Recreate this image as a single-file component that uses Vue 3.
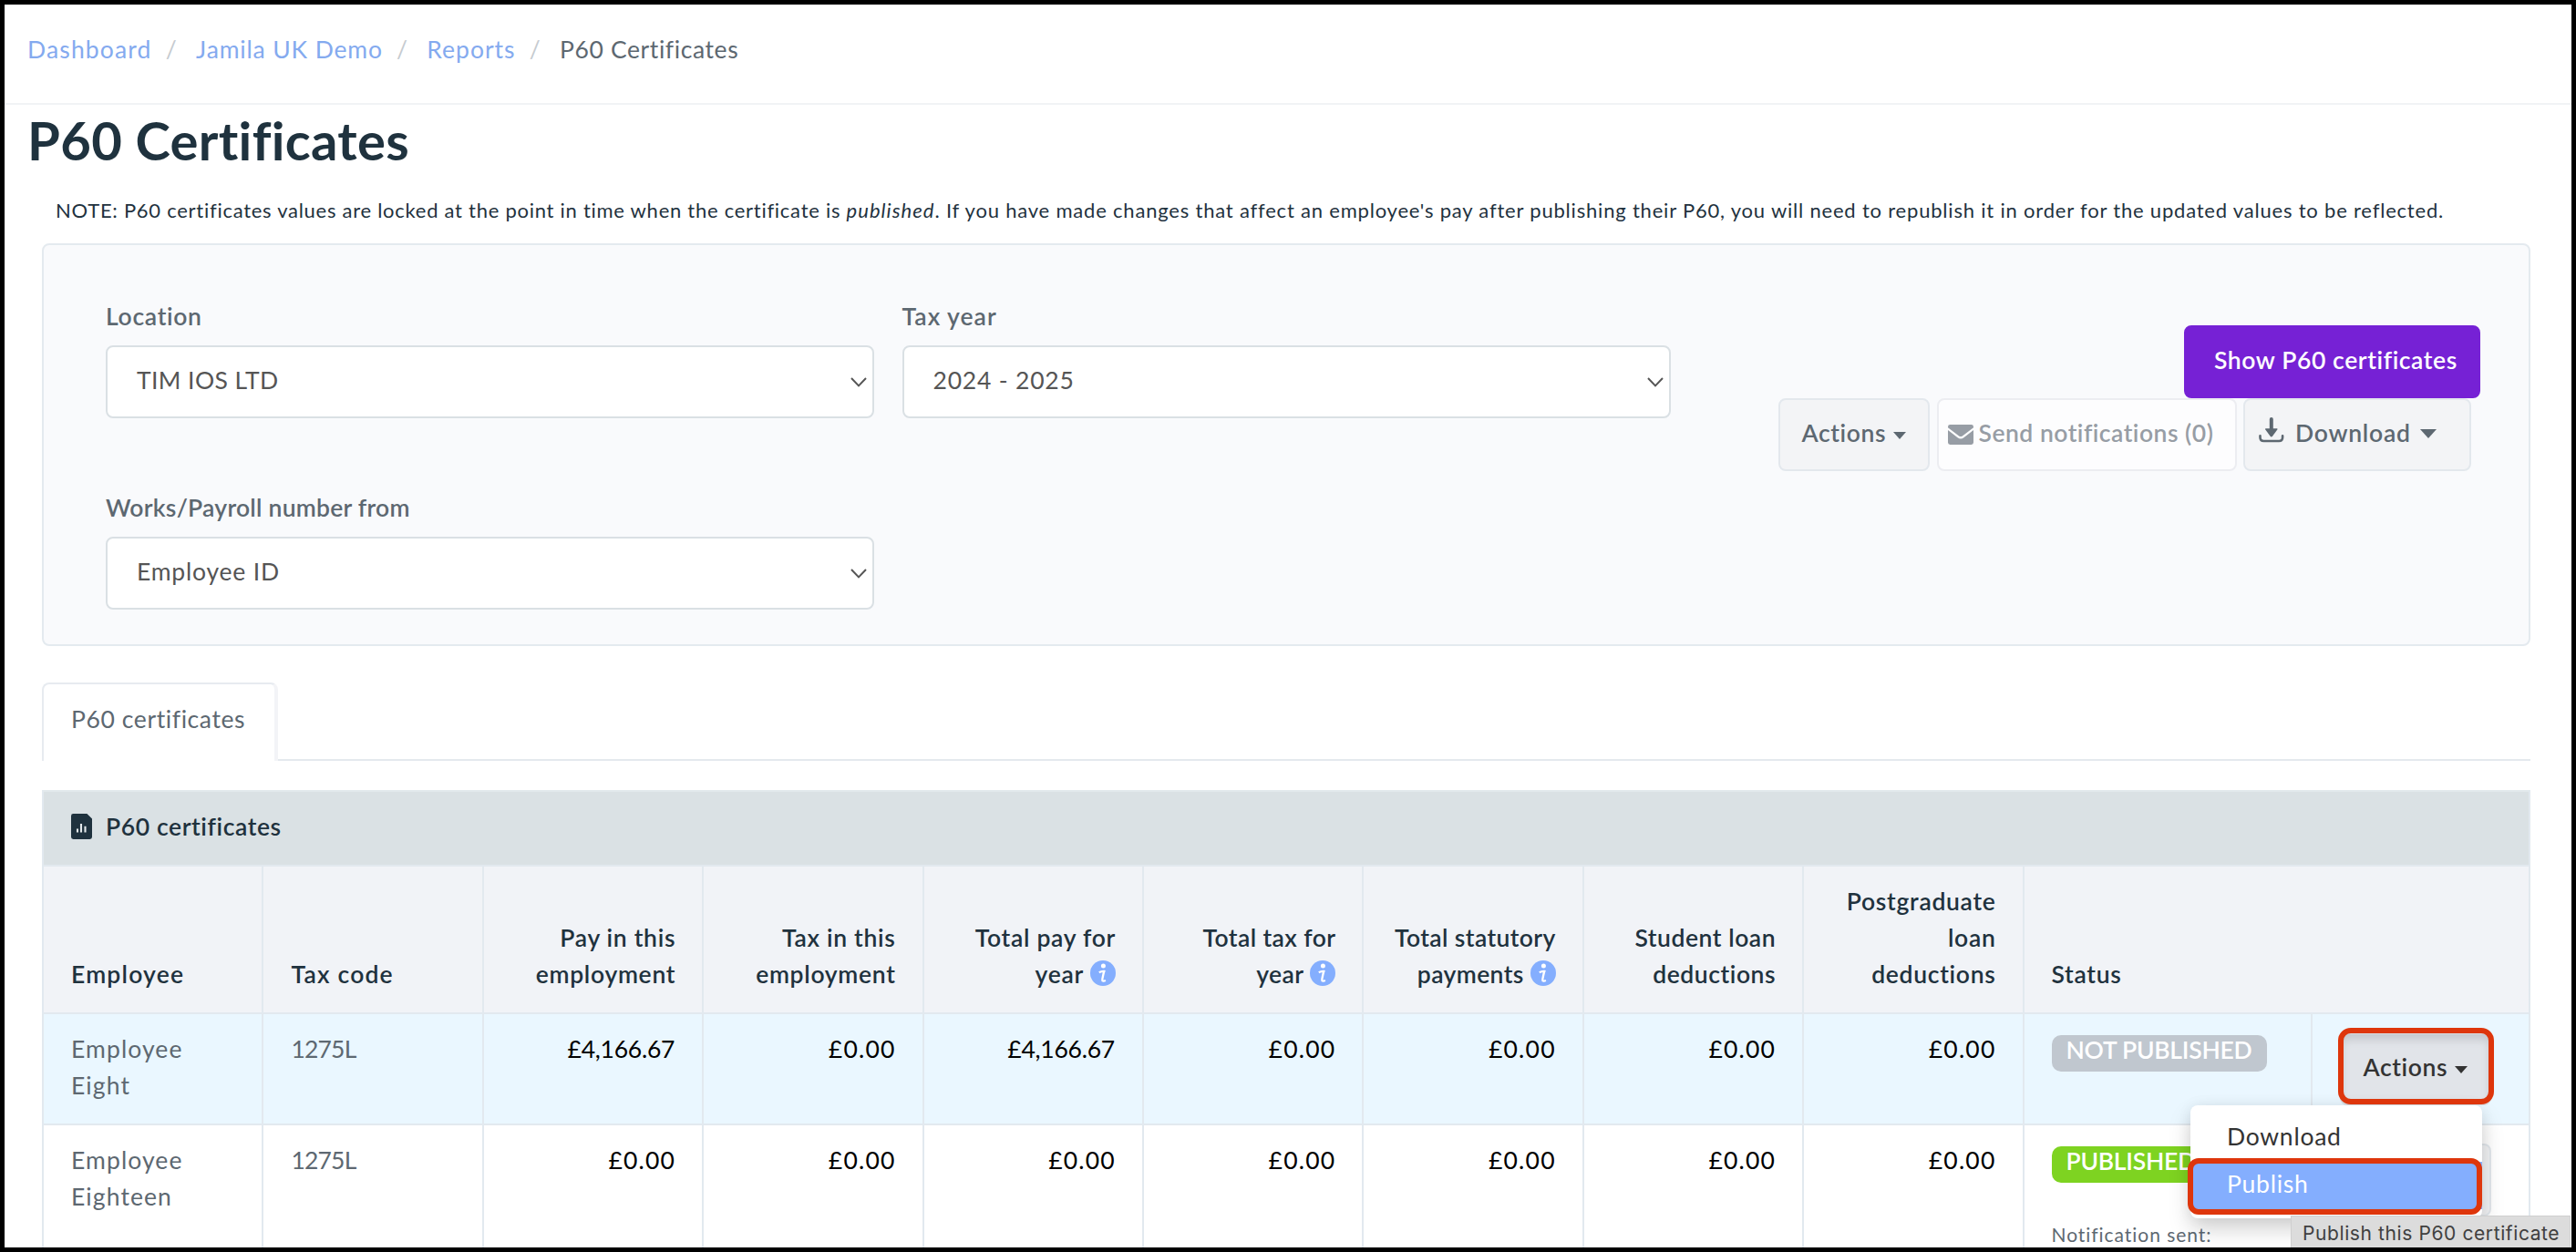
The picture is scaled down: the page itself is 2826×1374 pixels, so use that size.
<script setup>
const crumbs = [
  { text: 'Dashboard', cls: 'c1' },
  { text: 'Jamila UK Demo', cls: 'c2' },
  { text: 'Reports', cls: 'c3' },
]
const heads = [
  { lines: ['Employee'], left: true, cls: 'wide' },
  { lines: ['Tax code'], left: true, cls: 'wide' },
  { lines: ['Pay in this', 'employment'], cls: 'mid' },
  { lines: ['Tax in this', 'employment'], cls: 'mid' },
  { lines: ['Total pay for', 'year'], info: true, cls: 'mid' },
  { lines: ['Total tax for', 'year'], info: true },
  { lines: ['Total statutory', 'payments'], info: true },
  { lines: ['Student loan', 'deductions'], cls: 'soft' },
  { lines: ['Postgraduate', 'loan', 'deductions'], cls: 'mid' },
]
const rows = [
  {
    name: ['Employee', 'Eight'], code: '1275L', active: true,
    pay: ['£4,166.67', '£0.00', '£4,166.67', '£0.00', '£0.00', '£0.00', '£0.00'],
    status: 'NOT PUBLISHED',
  },
  {
    name: ['Employee', 'Eighteen'], code: '1275L', published: true,
    pay: ['£0.00', '£0.00', '£0.00', '£0.00', '£0.00', '£0.00', '£0.00'],
    status: 'PUBLISHED', note: 'Notification sent:',
  },
]
</script>

<template>
  <div class="page">
    <nav class="crumbs">
      <template v-for="c in crumbs" :key="c.text">
        <a :class="c.cls">{{ c.text }}</a><span class="slash">/</span>
      </template>
      <span class="here">P60 Certificates</span>
    </nav>

    <h1>P60 Certificates</h1>
    <p class="intro">NOTE: P60 certificates values are locked at the point in time when the certificate is <em>published</em><span class="rest">. If you have made changes that affect an employee's pay after publishing their P60, you will need to republish it in order for the updated values to be reflected.</span></p>

    <section class="filters">
      <div class="fields">
        <div class="field">
          <label>Location</label>
          <div class="select"><span class="s1">TIM IOS LTD</span><svg width="18" height="11" viewBox="0 0 18 11"><path d="M1 1l8 8.4L17 1" /></svg></div>
        </div>
        <div class="field">
          <label class="year">Tax year</label>
          <div class="select"><span>2024 - 2025</span><svg width="18" height="11" viewBox="0 0 18 11"><path d="M1 1l8 8.4L17 1" /></svg></div>
        </div>
        <div class="field">
          <label class="tight">Works/Payroll number from</label>
          <div class="select"><span>Employee ID</span><svg width="18" height="11" viewBox="0 0 18 11"><path d="M1 1l8 8.4L17 1" /></svg></div>
        </div>
      </div>
      <div class="tools">
        <button class="btn primary">Show P60 certificates</button>
        <div class="group">
          <button class="btn actions">Actions<i class="caret"></i></button>
          <button class="btn send">
            <svg width="28" height="22" viewBox="0 0 28 22"><path d="M2.4 0h23.2A2.4 2.4 0 0 1 28 2.4v.9L16.2 12.2q-2.2 1.7-4.4 0L0 3.3v-.9A2.4 2.4 0 0 1 2.4 0z" /><path d="M0 6l10.6 8.2q3.4 2.6 6.8 0L28 6v13.6a2.4 2.4 0 0 1-2.4 2.4H2.4A2.4 2.4 0 0 1 0 19.600z" /></svg>
            <span>Send notifications (0)</span>
          </button>
          <button class="btn download">
            <svg width="28" height="28" viewBox="0 0 28 28"><path class="line" d="M1.500 20.300v1.700q0 4 4 4h16.600q4 0 4-4v-1.700" /><path class="shaft" d="M13.800 2v11" /><path d="M7.400 12.300h12.800q.6.500.100 1.200L15 20.700q-1.200 1.400-2.400 0L7.300 13.500q-.5-.7.100-1.200z" /></svg>
            <span>Download</span><i class="caret big"></i>
          </button>
        </div>
      </div>
    </section>

    <div class="tabs"><div class="tab">P60 certificates</div><div class="rule"></div></div>

    <table>
      <colgroup>
        <col v-for="n in 9" :key="n" class="col" /><col class="col-status" /><col class="col" />
      </colgroup>
      <thead>
        <tr class="band">
          <td colspan="11">
            <div>
              <svg width="23" height="28" viewBox="0 0 23 28"><path d="M2.400 0H17.400L23 5.600V25.600A2.400 2.400 0 0 1 20.600 28H2.400A2.400 2.400 0 0 1 0 25.600V2.400A2.400 2.400 0 0 1 2.400 0z" fill="#1f323e" /><path d="M7 16.500v4M11 11v9.500M15.500 13.700v6.800" stroke="#e3e9eb" stroke-width="2.100" /></svg>
              <span>P60 certificates</span>
            </div>
          </td>
        </tr>
        <tr class="heads">
          <th v-for="(h, i) in heads" :key="i" :class="[h.cls, { left: h.left }]">
            <div v-for="(l, j) in h.lines" :key="j" class="ln">{{ l }}<svg v-if="h.info && j === h.lines.length - 1" class="info" width="28" height="28" viewBox="0 0 28 28"><circle cx="14" cy="14" r="14" fill="#84aefe" /><circle cx="14.400" cy="6" r="2.500" fill="#fff" /><path d="M9.800 13.300Q12.600 11.600 15.300 12Q14.600 14 13.300 20.600Q12.900 23.700 16.900 22" fill="none" stroke="#fff" stroke-width="2.300" /></svg></div>
          </th>
          <th class="left mid" colspan="2"><div class="ln">Status</div></th>
        </tr>
      </thead>
      <tbody>
        <tr v-for="r in rows" :key="r.name[1]" :class="{ active: r.active }">
          <td class="name"><div v-for="n in r.name" :key="n">{{ n }}</div></td>
          <td class="code">{{ r.code }}</td>
          <td v-for="(p, i) in r.pay" :key="i" class="num" :class="{ long: p.length > 6 }">{{ p }}</td>
          <td class="status">
            <div class="badge" :class="{ green: r.published }">{{ r.status }}</div>
            <div v-if="r.note" class="sent">{{ r.note }}</div>
          </td>
          <td class="act"><button class="btn actions" :class="{ pressed: r.active }">Actions<i class="caret"></i></button></td>
        </tr>
      </tbody>
    </table>

    <div class="menu">
      <div class="item">Download</div>
      <div class="item on">Publish</div>
    </div>
    <div class="mark mark-actions"></div>
    <div class="mark mark-publish"></div>
    <div class="tip">Publish this P60 certificate</div>
  </div>
</template>

<style>
body { margin: 0; background: #000; }
</style>

<style scoped>
.page {
  position: relative;
  box-sizing: border-box;
  width: 2826px;
  height: 1374px;
  border: 5px solid #000;
  background: #fff;
  overflow: hidden;
  font: 400 26.5px/40px Lato, "Open Sans", sans-serif;
  color: #5d6871;
  white-space: nowrap;
}
svg { display: block; flex: none; }

.crumbs {
  display: flex;
  align-items: center;
  box-sizing: border-box;
  height: 110px;
  padding: 0 0 11px 25px;
  border-bottom: 2px solid #f1f3f5;
}
.crumbs a { color: #84aaef; }
.c1 { letter-spacing: 1.15px; }
.c2 { letter-spacing: .85px; }
.c3 { letter-spacing: 1px; }
.here { letter-spacing: .6px; }
.slash { width: 48.500px; text-align: center; color: #c6cbd0; text-indent: -6px; }

h1 {
  margin: 4px 0 0 25px;
  font-size: 58px;
  line-height: 70px;
  font-weight: 700;
  letter-spacing: .3px;
  color: #1f323e;
}
.intro {
  margin: 22px 0 16px 56px;
  font-size: 22px;
  line-height: 40px;
  letter-spacing: .73px;
  color: #1f323e;
}
.intro em { letter-spacing: 1.050px; }
.intro .rest { letter-spacing: .8px; }

.filters {
  display: flex;
  justify-content: space-between;
  box-sizing: border-box;
  width: 2730px;
  height: 442px;
  margin-left: 41px;
  border: 2px solid #e4eaef;
  border-radius: 8px;
  background: #f9fafc;
}
.fields {
  display: grid;
  grid-template-columns: 843px 843px;
  column-gap: 30.500px;
  row-gap: 78px;
  align-content: start;
  padding: 58px 0 0 68px;
}
.field label { display: block; height: 52px; font-weight: 600; letter-spacing: .7px; }
.field label.tight { letter-spacing: .25px; }
.field label.year { letter-spacing: 1px; }
.select {
  display: flex;
  align-items: center;
  justify-content: space-between;
  box-sizing: border-box;
  height: 80px;
  padding: 0 6px 0 32px;
  border: 2px solid #dae0e4;
  border-radius: 8px;
  background: #fff;
  color: #555;
  letter-spacing: .8px;
}
.select span { padding-bottom: 4px; }
.select .s1 { letter-spacing: .4px; }
.select svg { fill: none; stroke: #555; stroke-width: 2; }

.tools {
  display: flex;
  flex-direction: column;
  align-items: flex-end;
  padding: 88px 53px 0 0;
}
.btn {
  display: flex;
  align-items: center;
  box-sizing: border-box;
  height: 80px;
  margin: 0;
  padding: 0 0 4px;
  border: 2px solid #e3e8ed;
  border-radius: 8px;
  background: #f3f4f6;
  font: 600 26.5px/40px Lato, "Open Sans", sans-serif;
  letter-spacing: .6px;
  color: #5d6871;
}
.primary {
  width: 325px;
  padding-left: 31px;
  border-color: #7621d5;
  background: #7621d5;
  color: #fff;
}
.group { display: flex; gap: 7.500px; margin-right: 10px; }
.actions { width: 166.500px; padding-left: 24px; }
.caret {
  width: 0;
  height: 0;
  margin: 5px 0 0 8px;
  border: 7.700px solid transparent;
  border-top: 8px solid currentColor;
  border-bottom: 0;
}
.caret.big { margin: 2px 0 0 10px; border-width: 10px 9.700px 0; }
.send {
  width: 329px;
  padding-left: 10px;
  border-color: #ecedf1;
  background: #fdfdfe;
  color: #979da5;
  letter-spacing: .5px;
}
.send span { margin-left: 6px; }
.send svg { margin-top: 3px; fill: #979da5; }
.download { width: 250px; padding-left: 15px; }
.download svg { margin-top: -7px; fill: #5d6871; }
.download .line { fill: none; stroke: #5d6871; stroke-width: 2.600; stroke-linecap: round; }
.download .shaft { stroke: #5d6871; stroke-width: 4; stroke-linecap: round; }
.download span { margin-left: 12px; letter-spacing: .75px; }

.tabs { display: flex; width: 2730px; height: 86px; margin: 40px 0 32px 41px; }
.tab {
  box-sizing: border-box;
  width: 259px;
  padding: 18px 0 0 30px;
  border: 2px solid #e7ebf0;
  border-right: 4px solid #f3f4f7;
  border-bottom: 0;
  border-radius: 8px 8px 0 0;
  letter-spacing: .6px;
}
.rule { flex: 1; border-bottom: 2px solid #e4e9ee; }

table {
  width: 2730px;
  margin-left: 41px;
  border-collapse: separate;
  border-spacing: 0;
  table-layout: fixed;
}
.col { width: 241.400px; }
.col-status { width: 316px; }
td, th {
  box-sizing: border-box;
  padding: 18px 29px 20px 30px;
  border-left: 2px solid #e2e9ef;
  border-bottom: 2px solid #e2e9ef;
  vertical-align: top;
  text-align: left;
}
td:last-child, th:last-child { border-right: 2px solid #e2e9ef; }
.band td { height: 84px; padding: 0 30px; border-top: 2px solid #e2e9ec; background: #dae1e4; vertical-align: middle; }
.band div { display: flex; align-items: center; padding-bottom: 4px; font-weight: 600; letter-spacing: .6px; color: #1f323e; }
.band span { margin-left: 15px; }
.heads th {
  height: 162px;
  padding: 18px 29px 22px 30px;
  background: #f1f3f7;
  vertical-align: bottom;
  text-align: right;
  font-weight: 600;
  letter-spacing: .400px;
  color: #1f323e;
}
.heads th.left { text-align: left; }
.heads th.wide { letter-spacing: 1.200px; }
.heads th.mid { letter-spacing: .700px; }
.heads th.soft { letter-spacing: .550px; }
.ln { height: 40px; }
.info { display: inline-block; margin-left: 7px; vertical-align: -3px; }
tbody td { height: 122px; }
.active td { background: #eaf7ff; }
.name { letter-spacing: 1.100px; }
.code { letter-spacing: -.8px; }
.num { text-align: right; letter-spacing: 1.200px; color: #000; }
.num.long { letter-spacing: -.25px; padding-right: 30px; }
.status { padding-top: 23px; }
.badge {
  box-sizing: border-box;
  width: 236px;
  height: 40px;
  padding-left: 16px;
  border-radius: 10px;
  background: #c0c7cf;
  font-weight: 600;
  line-height: 33px;
  letter-spacing: -.25px;
  color: #fff;
}
.badge.green { width: 180px; background: #7ed321; }
.sent { margin-top: 37px; font-size: 21px; letter-spacing: .95px; }
.act { padding-top: 20px; padding-bottom: 20px; }
.act .btn { height: 80px; }
.act .pressed {
  border-color: #d9dde2;
  background: #e1e4e9;
  box-shadow: inset 0 6px 10px rgba(0, 0, 0, .125);
  color: #333;
}

.menu {
  position: absolute;
  left: 2398px;
  top: 1208px;
  box-sizing: border-box;
  width: 320px;
  height: 124px;
  padding: 10px 0;
  border-radius: 8px;
  background: #fff;
  box-shadow: 0 12px 24px rgba(0, 0, 0, .175), 0 0 16px rgba(0, 0, 0, .06);
}
.item {
  box-sizing: border-box;
  height: 52px;
  padding: 4px 0 0 40px;
  letter-spacing: .75px;
  color: #333;
}
.item.on { background: #84aefe; color: #fff; }
.mark { position: absolute; box-sizing: border-box; border: 6px solid #de360c; border-radius: 14px; }
.mark-actions { left: 2560px; top: 1123px; width: 171px; height: 84px; }
.mark-publish { left: 2395px; top: 1266px; width: 323px; height: 62px; border-radius: 12px; }
.tip {
  position: absolute;
  left: 2508px;
  top: 1329px;
  box-sizing: border-box;
  width: 307px;
  height: 40px;
  padding-left: 12px;
  border: 1px solid #cfcfcf;
  background: #dcdcdc;
  font: 400 21px/37px Inter, sans-serif;
  letter-spacing: .6px;
  color: #404040;
}
</style>
